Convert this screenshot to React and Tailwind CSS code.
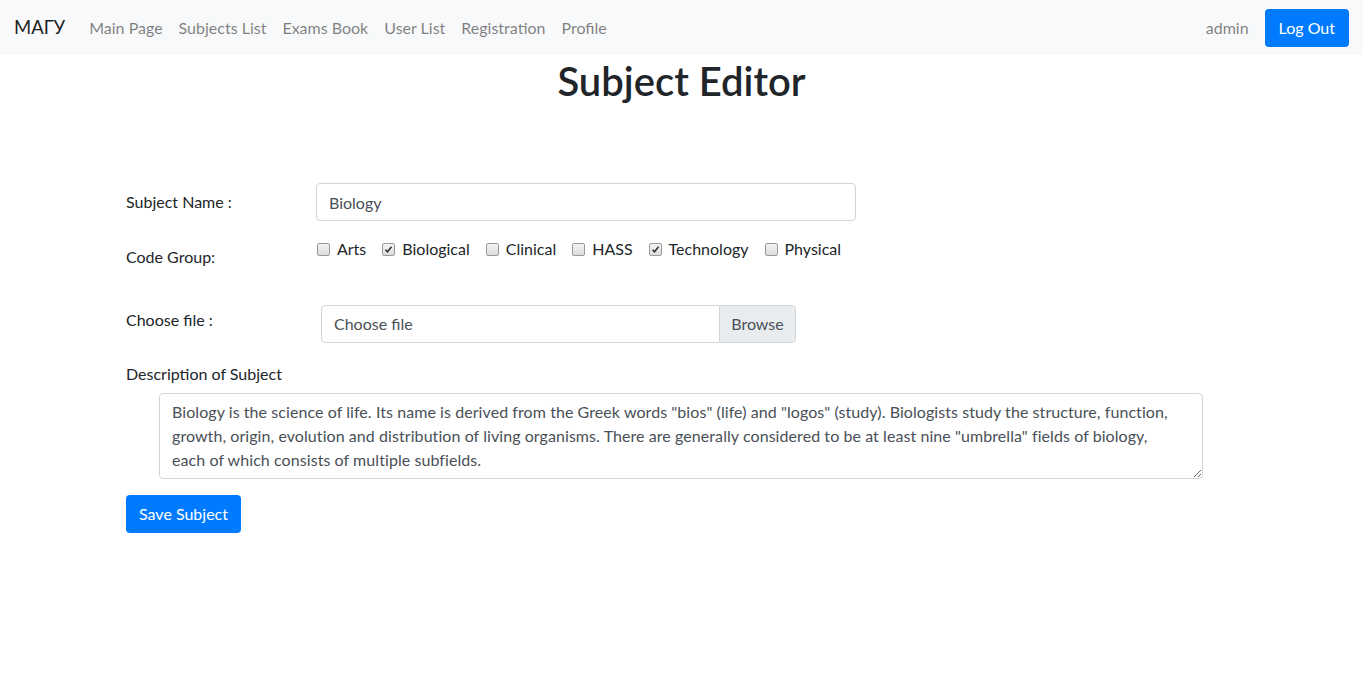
import { useState } from 'react'

const font = { fontFamily: "Lato, 'Noto Sans', sans-serif" }

const groups = [
  { name: 'Arts', checked: false },
  { name: 'Biological', checked: true },
  { name: 'Clinical', checked: false },
  { name: 'HASS', checked: false },
  { name: 'Technology', checked: true },
  { name: 'Physical', checked: false },
]

function Check({ checked }) {
  return (
    <span className="w-[13px] h-[13px] border border-[#9a9a9a] rounded-[2px] bg-gradient-to-b from-[#f4f4f4] to-[#dcdcdc] flex items-center justify-center">
      {checked && (
        <svg width="9" height="9" viewBox="0 0 9 9" fill="none" stroke="#333" strokeWidth="1.6">
          <path d="M1.5 4.8l2 2L7.5 1.8" />
        </svg>
      )}
    </span>
  )
}

export default function App() {
  const [codes, setCodes] = useState(groups)
  const links = ['Main Page', 'Subjects List', 'Exams Book', 'User List', 'Registration', 'Profile']

  return (
    <div style={font} className="min-h-[698px] bg-white text-[#212529] text-[16px]">
      {/* Navbar */}
      <nav className="h-[55px] bg-[#f8f9fa] flex items-center px-[14px]">
        <span className="text-[18.5px] text-black/90 mr-[16px]">МАГУ</span>
        <ul className="flex">
          {links.map(l => (
            <li key={l} className="px-[8px] text-black/50">{l}</li>
          ))}
        </ul>
        <div className="ml-auto flex items-center">
          <span className="text-black/50 px-[8px] mr-[8px]">admin</span>
          <button className="h-[38px] px-[14px] bg-[#007bff] text-white rounded-[4px]">Log Out</button>
        </div>
      </nav>

      <h1 className="text-center text-[40px] font-semibold leading-[1.2] mt-[2px]">Subject Editor</h1>

      <div className="w-[1110px] ml-[126px] mt-[78px]">
        <div className="flex items-center h-[38px]">
          <label className="w-[190px]">Subject Name :</label>
          <input
            defaultValue="Biology"
            style={font}
            className="w-[540px] h-[38px] border border-[#ced4da] rounded-[4px] px-[12px] text-[#495057] outline-none"
          />
        </div>

        <div className="flex mt-[17px]">
          <label className="w-[191px] mt-[7px]">Code Group:</label>
          <div className="flex items-center gap-x-[16px] -mt-[1px] h-[24px]">
            {codes.map((c, i) => (
              <span
                key={c.name}
                className="flex items-center gap-[7px] cursor-pointer"
                onClick={() => setCodes(codes.map((x, j) => j === i ? { ...x, checked: !x.checked } : x))}
              >
                <Check checked={c.checked} />
                {c.name}
              </span>
            ))}
          </div>
        </div>

        <div className="flex items-start mt-[36px]">
          <label className="w-[195px] mt-[3px]">Choose file :</label>
          <div className="w-[475px] h-[38px] flex border border-[#ced4da] rounded-[4px] overflow-hidden">
            <span className="flex-1 px-[12px] flex items-center text-[#495057]">Choose file</span>
            <span className="w-[76px] bg-[#e9ecef] border-l border-[#ced4da] flex items-center justify-center text-[#495057]">Browse</span>
          </div>
        </div>

        <label className="block mt-[19px]">Description of Subject</label>
        <textarea
          style={font}
          className="block ml-[33px] mt-[7px] w-[1044px] h-[86px] border border-[#ced4da] rounded-[4px] pl-[12px] pr-[20px] py-[6px] text-[#495057] leading-[24px] tracking-[0.07px] outline-none"
          defaultValue={'Biology is the science of life. Its name is derived from the Greek words "bios" (life) and "logos" (study). Biologists study the structure, function, growth, origin, evolution and distribution of living organisms. There are generally considered to be at least nine "umbrella" fields of biology, each of which consists of multiple subfields.'}
        />

        <button className="mt-[16px] h-[38px] px-[13px] bg-[#007bff] text-white rounded-[4px]">Save Subject</button>
      </div>
    </div>
  )
}
